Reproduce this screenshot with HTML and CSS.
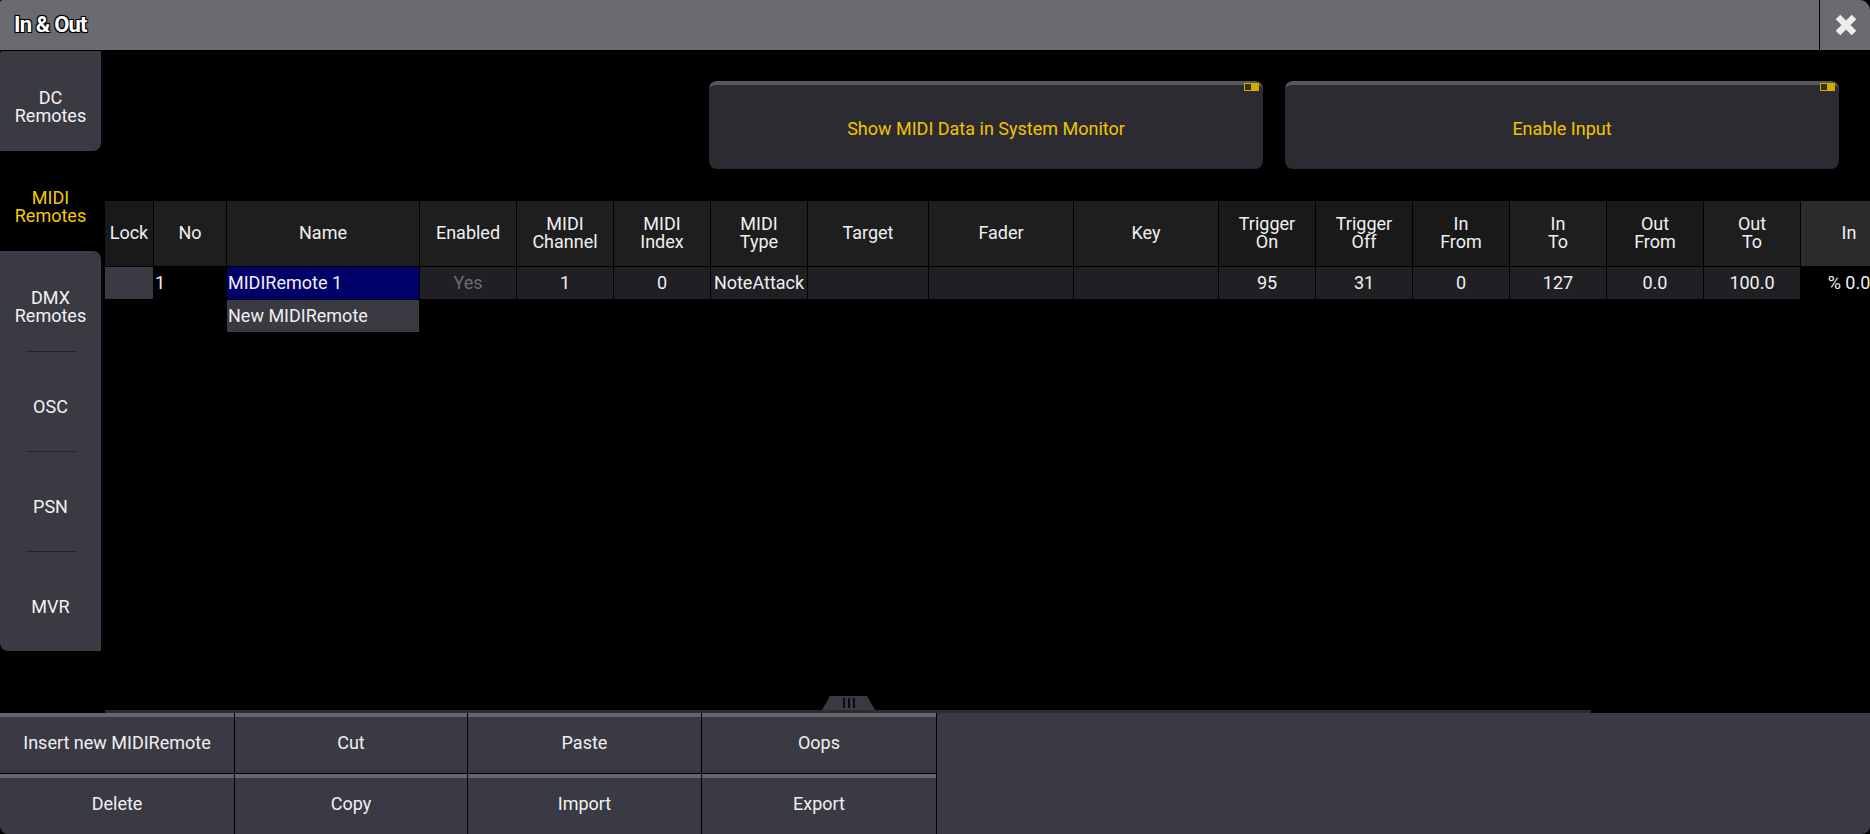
FILE: index.html
```html
<!DOCTYPE html>
<html lang="en">
<head>
<meta charset="utf-8">
<title>In &amp; Out</title>
<link rel="stylesheet" href="styles.css">
</head>
<body>
<div class="app">
  <header class="titlebar">
    <div class="title">In &amp; Out</div>
    <div class="close">
      <svg width="24" height="24" viewBox="0 0 24 24"><path d="M4 4 L20 20 M20 4 L4 20" stroke="#ececec" stroke-width="6.5" fill="none"/></svg>
    </div>
  </header>

  <div class="main">
    <nav class="sidebar">
      <div class="tab tab-dc">DC<br>Remotes</div>
      <div class="tab tab-active">MIDI<br>Remotes</div>
      <div class="tab-group">
        <div class="tab">DMX<br>Remotes</div>
        <div class="tab tab-sep">OSC</div>
        <div class="tab tab-sep">PSN</div>
        <div class="tab tab-sep">MVR</div>
      </div>
    </nav>

    <section class="content">
      <div class="toggles">
        <div class="toggle">Show MIDI Data in System Monitor<span class="ind"></span></div>
        <div class="toggle">Enable Input<span class="ind"></span></div>
      </div>

      <div class="grid">
        <div class="h h-dk">Lock</div>
        <div class="h">No</div>
        <div class="h">Name</div>
        <div class="h">Enabled</div>
        <div class="h">MIDI<br>Channel</div>
        <div class="h">MIDI<br>Index</div>
        <div class="h">MIDI<br>Type</div>
        <div class="h">Target</div>
        <div class="h">Fader</div>
        <div class="h">Key</div>
        <div class="h h-dk">Trigger<br>On</div>
        <div class="h h-dk">Trigger<br>Off</div>
        <div class="h h-dk">In<br>From</div>
        <div class="h">In<br>To</div>
        <div class="h h-dk">Out<br>From</div>
        <div class="h">Out<br>To</div>
        <div class="h h-lt">In</div>

        <div class="c c-lock"></div>
        <div class="c c-none c-left">1</div>
        <div class="c c-sel c-left">MIDIRemote 1</div>
        <div class="c c-dim">Yes</div>
        <div class="c">1</div>
        <div class="c">0</div>
        <div class="c">NoteAttack</div>
        <div class="c"></div>
        <div class="c"></div>
        <div class="c"></div>
        <div class="c">95</div>
        <div class="c">31</div>
        <div class="c">0</div>
        <div class="c">127</div>
        <div class="c">0.0</div>
        <div class="c">100.0</div>
        <div class="c c-none">% 0.0</div>

        <div class="c c-none"></div>
        <div class="c c-none"></div>
        <div class="c c-new c-left">New MIDIRemote</div>
      </div>

      <div class="hscroll">
        <div class="handle"><span></span><span></span><span></span></div>
        <div class="track"></div>
      </div>
    </section>
  </div>

  <footer class="bottom">
    <div class="btns">
      <div class="btn">Insert new MIDIRemote</div>
      <div class="btn">Cut</div>
      <div class="btn">Paste</div>
      <div class="btn">Oops</div>
      <div class="btn btn-bl">Delete</div>
      <div class="btn">Copy</div>
      <div class="btn">Import</div>
      <div class="btn">Export</div>
    </div>
    <div class="panel"></div>
  </footer>
</div>
</body>
</html>
```

FILE: styles.css
```css
* { box-sizing: border-box; }

html, body {
  margin: 0;
  padding: 0;
  background: #000;
}

body {
  width: 1870px;
  height: 834px;
  overflow: hidden;
  font-family: Roboto, "Liberation Sans", sans-serif;
  font-size: 18px;
  color: #f0f0f0;
}

.app {
  display: flex;
  flex-direction: column;
  width: 1870px;
  height: 834px;
}

/* Title bar */
.titlebar {
  height: 50px;
  flex: none;
  display: flex;
  align-items: stretch;
  background: #6a6b70;
  border-radius: 3px 10px 0 0;
}

.title {
  flex: 1;
  display: flex;
  align-items: center;
  padding-left: 14px;
  padding-bottom: 1px;
  font-size: 22px;
  font-weight: 700;
  letter-spacing: -0.8px;
  color: #fff;
  text-shadow: -1px -1px 0 #000, 1px -1px 0 #000, -1px 1px 0 #000, 1px 1px 0 #000, 0 0 2px #000;
}

.close {
  width: 51px;
  border-left: 1px solid #000;
  display: flex;
  align-items: center;
  justify-content: center;
  padding-left: 2px;
}

/* Main */
.main {
  height: 663px;
  flex: none;
  display: flex;
}

.sidebar {
  width: 101px;
  flex: none;
  padding-top: 1px;
  display: flex;
  flex-direction: column;
}

.tab {
  height: 100px;
  display: flex;
  align-items: center;
  justify-content: center;
  text-align: center;
  padding-top: 11px;
  line-height: 18px;
  color: #f2f2f2;
}

.tab-dc {
  background: #393a42;
  border-radius: 3px 0 8px 0;
}

.tab-active {
  color: #f4c90a;
}

.tab-group {
  background: #393a42;
  border-radius: 0 8px 0 8px;
}

.tab-sep {
  background-image: linear-gradient(#24242a, #24242a);
  background-repeat: no-repeat;
  background-size: 50px 1px;
  background-position: 26px 0;
}

.content {
  flex: 1;
  min-width: 0;
  overflow: hidden;
  display: flex;
  flex-direction: column;
  padding-left: 4px;
}

/* Toggles */
.toggles {
  margin-top: 31px;
  height: 88px;
  flex: none;
  display: flex;
  justify-content: flex-end;
  gap: 22px;
  padding-right: 31px;
}

.toggle {
  width: 554px;
  flex: none;
  position: relative;
  display: flex;
  align-items: center;
  justify-content: center;
  padding-top: 2px;
  background: #2b2b31;
  border-top: 4px solid #58585d;
  border-radius: 8px;
  color: #f0c400;
}

.ind {
  position: absolute;
  top: -2px;
  right: 4px;
  width: 15px;
  height: 8px;
  padding: 1px;
  background: #d2ad00;
  display: flex;
}

.ind::before {
  content: "";
  width: 6px;
  height: 6px;
  background: #3a3206;
}

/* Table */
.grid {
  margin-top: 32px;
  flex: none;
  display: grid;
  grid-template-columns: 48px 72px 192px 96px 96px 96px 96px 120px 144px 144px 96px 96px 96px 96px 96px 96px 96px;
  grid-template-rows: 65px 32px 32px;
  column-gap: 1px;
  row-gap: 1px;
}

.h {
  background: #1e1e1f;
  display: flex;
  align-items: center;
  justify-content: center;
  text-align: center;
  line-height: 18px;
  padding-bottom: 1px;
  color: #f0f0f0;
}

.h-dk { background: #19191a; }
.h-lt { background: #2a2a2b; }

.c {
  background: #1f1f24;
  display: flex;
  align-items: center;
  justify-content: center;
  white-space: nowrap;
  overflow: hidden;
  padding-bottom: 1px;
  color: #f0f0f0;
}

.c-left {
  justify-content: flex-start;
  padding-left: 1px;
}

.c-none { background: transparent; }
.c-lock { background: #393a42; }
.c-sel { background: #00006b; }
.c-new { background: #393a42; }
.c-dim { color: #6c6c6c; }

/* Horizontal scroll */
.hscroll {
  margin-top: auto;
  display: flex;
  flex-direction: column;
}

.handle {
  margin-left: 717px;
  width: 53px;
  height: 14px;
  background: #393a42;
  clip-path: polygon(15% 0, 85% 0, 100% 100%, 0 100%);
  display: flex;
  justify-content: center;
  align-items: center;
  gap: 3px;
}

.handle span {
  width: 2px;
  height: 10px;
  background: #0c0c0e;
}

.track {
  width: 1486px;
  height: 3px;
  background: #2c2c33;
}

/* Bottom */
.bottom {
  height: 121px;
  flex: none;
  display: flex;
  gap: 1px;
}

.btns {
  display: grid;
  grid-template-columns: 234px 232px 233px 234px;
  grid-template-rows: 60px 60px;
  gap: 1px;
}

.btn {
  background: #393a43;
  border-top: 4px solid #65656b;
  display: flex;
  align-items: center;
  justify-content: center;
  padding-bottom: 5px;
  color: #f0f0f0;
}

.btn-bl { border-bottom-left-radius: 8px; }

.panel {
  flex: 1;
  background: #393a43;
  border-bottom-right-radius: 8px;
}
```
